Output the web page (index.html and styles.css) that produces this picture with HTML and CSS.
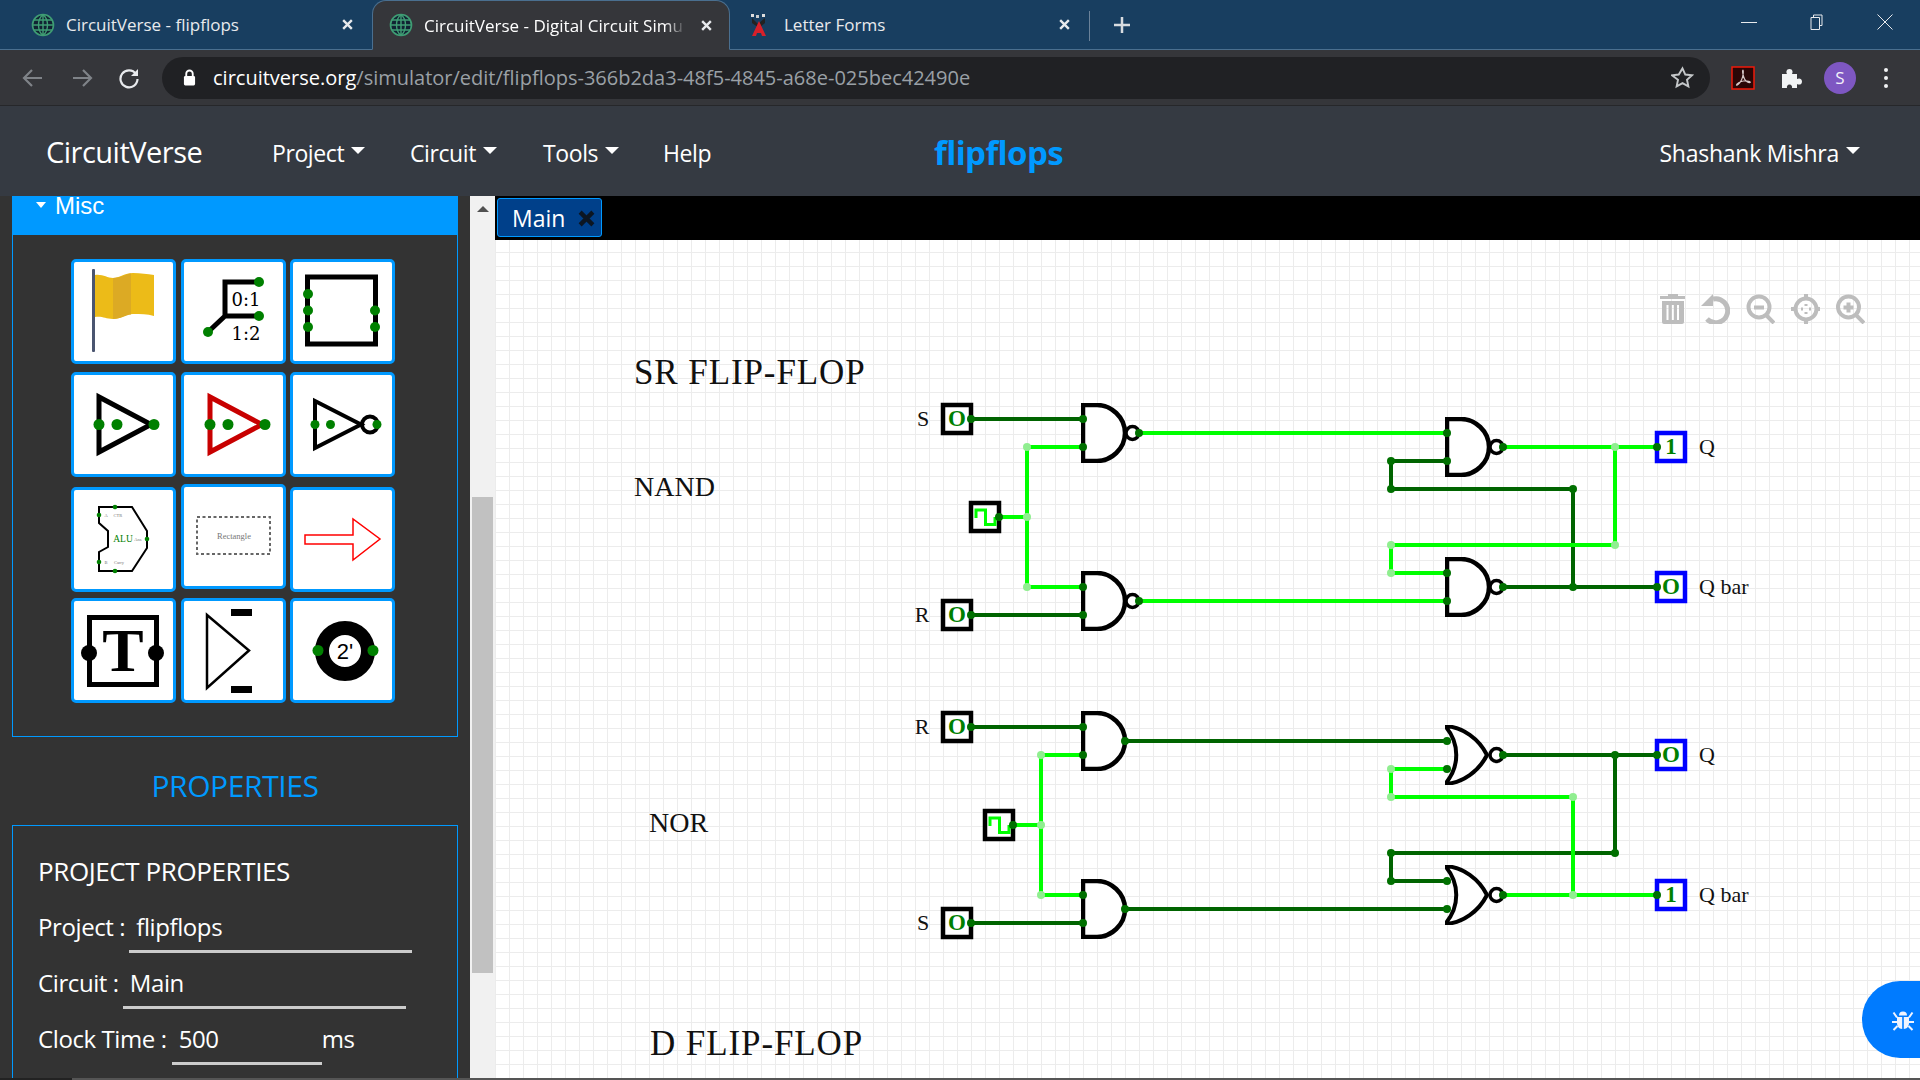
FILE: index.html
```html
<!DOCTYPE html>
<html lang="en">
<head>
    <meta charset="UTF-8">
    <title>CircuitVerse - Digital Circuit Simulator</title>
    <link rel="stylesheet" href="styles.css">
</head>
<body>

<!-- Browser tabs -->
<div class="tabstrip">
    <div class="tab">
        <svg class="favicon" viewBox="0 0 24 24"><use href="#globe"/></svg>
        <span class="tab-title">CircuitVerse - flipflops</span>
        <svg class="tab-close" viewBox="0 0 12 12"><path d="M2 2l8 8M10 2l-8 8"/></svg>
    </div>
    <div class="tab tab-active">
        <svg class="favicon" viewBox="0 0 24 24"><use href="#globe"/></svg>
        <span class="tab-title">CircuitVerse - Digital Circuit Simu</span>
        <svg class="tab-close" viewBox="0 0 12 12"><path d="M2 2l8 8M10 2l-8 8"/></svg>
    </div>
    <div class="tab tab-last">
        <svg class="favicon favicon-small" viewBox="0 0 20 24">
            <rect x="2" y="1" width="3" height="3" fill="#ddd"/><rect x="7" y="2" width="3" height="3" fill="#ccc"/><rect x="13" y="1" width="3" height="3" fill="#ddd"/>
            <path d="M3 5l6 6 7-6v5l-6 5-7-5z" fill="#222"/>
            <path d="M10 8l7 15h-4l-1-3H8l-1 3H3z" fill="#d8202a"/>
        </svg>
        <span class="tab-title">Letter Forms</span>
        <svg class="tab-close" viewBox="0 0 12 12"><path d="M2 2l8 8M10 2l-8 8"/></svg>
    </div>
    <div class="tab-divider"></div>
    <svg class="new-tab" viewBox="0 0 18 18"><path d="M9 1v16M1 9h16"/></svg>
    <div class="window-buttons">
        <svg viewBox="0 0 16 16"><path d="M0 8.5h16"/></svg>
        <svg viewBox="0 0 16 16"><path d="M4.5 3.5V1h8.5v10.500h-2.500M2 3.500h8.500v12H2z"/></svg>
        <svg viewBox="0 0 16 16"><path d="M0.500 0.500l15 15M15.500 0.500l-15 15"/></svg>
    </div>
</div>

<!-- Address bar -->
<div class="toolbar">
    <svg class="tool-arrow dim" viewBox="0 0 22 22"><path d="M20 11H3M10 3l-8 8 8 8"/></svg>
    <svg class="tool-arrow dim" viewBox="0 0 22 22"><path d="M2 11h17M12 3l8 8-8 8"/></svg>
    <svg class="tool-arrow" viewBox="0 0 22 22"><path d="M18 7a8.500 8.500 0 1 0 1.500 5"/><path class="solid" d="M20 2v7h-7z"/></svg>
    <div class="omnibox">
        <svg class="lock" viewBox="0 0 14 18"><path d="M3.500 8V5a3.500 3.500 0 0 1 7 0v3" fill="none" stroke="#fff" stroke-width="2"/><rect x="1" y="7.500" width="12" height="10" rx="1.500" fill="#fff"/></svg>
        <span class="url"><b>circuitverse.org</b>/simulator/edit/flipflops-366b2da3-48f5-4845-a68e-025bec42490e</span>
        <svg class="star" viewBox="0 0 24 24"><path d="M12 2.500l2.900 6.400 7 .8-5.200 4.700 1.400 6.900-6.100-3.500-6.100 3.500 1.400-6.900L1.100 9.700l7-.8z"/></svg>
    </div>
    <svg class="ext-pdf" viewBox="0 0 24 24"><rect x="1" y="1" width="22" height="22" fill="#2a0606" stroke="#f01a0a" stroke-width="1.500"/><path d="M12 4c-1 0 0 6 1.500 9 1 2 4 4 5.500 3.500s-3-2-6.500-1.500-7 3-7 4 3-1 5-5 2-10 1.500-10z" fill="none" stroke="#d8c8c8" stroke-width="1.200"/></svg>
    <svg class="ext-puzzle" viewBox="0 0 24 24"><path d="M2 8h5c-1-1.500-1-5 2.500-5s3.500 3.500 2.500 5h5v5c1.500-1 5-1 5 2.500s-3.500 3.500-5 2.500v4h-5c.5-1.500-.5-3.500-2.500-3.500S6.500 20.500 7 22H2z"/></svg>
    <div class="avatar">S</div>
    <div class="chrome-menu"><i></i><i></i><i></i></div>
</div>

<!-- Site navbar -->
<nav class="navbar">
    <span class="brand">CircuitVerse</span>
    <span class="nav-item nav-project">Project<i class="caret"></i></span>
    <span class="nav-item nav-circuit">Circuit<i class="caret"></i></span>
    <span class="nav-item nav-tools">Tools<i class="caret"></i></span>
    <span class="nav-item nav-help">Help</span>
    <span class="project-name">flipflops</span>
    <span class="nav-item nav-user">Shashank Mishra<i class="caret"></i></span>
</nav>

<div class="workspace">
    <!-- Left panel -->
    <aside class="sidebar">
        <div class="misc-head"><i class="caret"></i>Misc</div>
        <div class="misc-panel">
            <div class="tile-grid">
                <div class="tile">
                    <svg viewBox="3 3 99 99">
                        <path d="M24 16C32 15 36 19 42 19S54 14 62 14 76 15 83 16V57C76 55 70 55 62 55S50 60 42 60 32 57 24 58Z" fill="#ecbb18"/>
                        <path d="M42 19C50 19 54 15 60 14.500V55.500C54 56 50 60 42 60Z" fill="#dcaa24"/>
                        <rect x="21" y="10" width="3" height="83" rx="1" fill="#4a5570"/>
                    </svg>
                </div>
                <div class="tile">
                    <svg viewBox="3 3 99 99">
                        <path class="ic" d="M78 23H44V57H78M44 57L27 73" stroke-width="5"/>
                        <text class="ic-wide" x="65" y="47">0:1</text>
                        <text class="ic-wide" x="65" y="81">1:2</text>
                        <circle class="ic-node" cx="78" cy="23" r="5"/><circle class="ic-node" cx="78" cy="57" r="5"/><circle class="ic-node" cx="27" cy="73" r="5"/>
                    </svg>
                </div>
                <div class="tile">
                    <svg viewBox="3 3 99 99">
                        <rect class="ic" x="17.500" y="18" width="68" height="67" stroke-width="5"/>
                        <circle class="ic-node" cx="18" cy="35" r="5"/><circle class="ic-node" cx="18" cy="51.500" r="5"/><circle class="ic-node" cx="18" cy="68" r="5"/>
                        <circle class="ic-node" cx="85" cy="51.500" r="5"/><circle class="ic-node" cx="85" cy="68" r="5"/>
                    </svg>
                </div>
                <div class="tile">
                    <svg viewBox="3 3 99 99">
                        <path class="ic" d="M28 25V80L80 52.500Z" stroke-width="5"/>
                        <circle class="ic-node" cx="28" cy="52.500" r="5.500"/><circle class="ic-node" cx="46" cy="52.500" r="5.500"/><circle class="ic-node" cx="83" cy="52.500" r="5.500"/>
                    </svg>
                </div>
                <div class="tile">
                    <svg viewBox="3 3 99 99">
                        <path class="ic ic-red" d="M29 25V80L81 52.500Z" stroke-width="5"/>
                        <circle class="ic-node" cx="29" cy="52.500" r="5.500"/><circle class="ic-node" cx="47" cy="52.500" r="5.500"/><circle class="ic-node" cx="84" cy="52.500" r="5.500"/>
                    </svg>
                </div>
                <div class="tile">
                    <svg viewBox="3 3 99 99">
                        <path class="ic" d="M25 29V76L71 52.500Z" stroke-width="4"/>
                        <circle class="ic" cx="80" cy="52.500" r="8" stroke-width="4"/>
                        <circle class="ic-node" cx="25" cy="52.500" r="4.500"/><circle class="ic-node" cx="40.500" cy="52.500" r="4.500"/><circle class="ic-node" cx="87" cy="52.500" r="4.500"/>
                    </svg>
                </div>
                <div class="tile tile-low">
                    <svg viewBox="3 3 99 99">
                        <path class="ic" d="M28 20H61L76 44V61L61 84H28V65L37 60V44L28 36Z" stroke-width="2"/>
                        <text class="ic-serif ic-green" x="52" y="55" font-size="9.500">ALU</text>
                        <text class="ic-tiny" x="35" y="30">A</text><text class="ic-tiny" x="47" y="30">CTR</text>
                        <text class="ic-tiny" x="67" y="54">Ans</text>
                        <text class="ic-tiny" x="35" y="77">B</text><text class="ic-tiny" x="48" y="77">Carry</text>
                        <circle class="ic-node" cx="44" cy="20" r="2.300"/><circle class="ic-node" cx="28" cy="28" r="2.300"/><circle class="ic-node" cx="76" cy="52" r="2.300"/>
                        <circle class="ic-node" cx="28" cy="75" r="2.300"/><circle class="ic-node" cx="44" cy="84" r="2.300"/>
                    </svg>
                </div>
                <div class="tile tile-high">
                    <svg viewBox="3 3 99 99">
                        <rect x="16" y="33" width="73" height="37" fill="none" stroke="#666" stroke-width="2" stroke-dasharray="3 2.500"/>
                        <text class="ic-serif ic-gray" x="53" y="55" font-size="8.500">Rectangle</text>
                    </svg>
                </div>
                <div class="tile tile-low">
                    <svg viewBox="3 3 99 99"><path d="M15 48H63V32L90 52 63 73V57H15Z" fill="none" stroke="#f00" stroke-width="1.500"/></svg>
                </div>
                <div class="tile">
                    <svg viewBox="3 3 99 99">
                        <rect class="ic" x="18.500" y="19.500" width="67" height="67" stroke-width="5"/>
                        <text class="ic-serif ic-t" x="52" y="73">T</text>
                        <circle cx="18" cy="55" r="8"/><circle cx="85" cy="55" r="8"/>
                    </svg>
                </div>
                <div class="tile">
                    <svg viewBox="3 3 99 99">
                        <path class="ic" d="M26 17V90L68 52.500Z" stroke-width="2.500"/>
                        <rect x="50" y="11" width="21" height="7"/><rect x="50" y="88" width="21" height="7"/>
                    </svg>
                </div>
                <div class="tile">
                    <svg viewBox="3 3 99 99">
                        <circle class="ic" cx="55" cy="53" r="23" stroke-width="14"/>
                        <text class="ic-sans" x="55" y="61" font-size="22">2'</text>
                        <circle class="ic-node" cx="28" cy="52.500" r="5.500"/><circle class="ic-node" cx="83" cy="52.500" r="5.500"/>
                    </svg>
                </div>
            </div>
        </div>

        <h3 class="props-title">PROPERTIES</h3>
        <div class="props-panel">
            <h4>PROJECT PROPERTIES</h4>
            <div class="prop-row">Project :<span class="prop-value prop-project">flipflops</span></div>
            <div class="prop-row">Circuit :<span class="prop-value prop-circuit">Main</span></div>
            <div class="prop-row">Clock Time :<span class="prop-value prop-clock">500</span><span class="prop-unit">ms</span></div>
            <div class="clock-slider"><i></i></div>
        </div>
    </aside>

    <div class="scrollbar">
        <i class="scroll-up"></i>
        <i class="scroll-thumb"></i>
    </div>

    <main class="stage">
        <div class="circuit-tabs">
            <div class="circuit-tab">Main<svg viewBox="0 0 16 16"><path d="M2 2l12 12M14 2L2 14"/></svg></div>
        </div>
        <div class="canvas">
            <svg class="schematic" viewBox="495 240 1425 838">
                <defs>
                    <symbol id="globe" viewBox="0 0 24 24">
                        <circle cx="12" cy="12" r="10.500" fill="#123" stroke="#3f9d74" stroke-width="1.600"/>
                        <path d="M12 1.500v21M1.500 12h21M3 7h18M3 17h18M12 1.500c-6 5-6 16 0 21M12 1.500c6 5 6 16 0 21" fill="none" stroke="#3f9d74" stroke-width="1.400"/>
                    </symbol>
                    <symbol id="and-gate" viewBox="0 0 60 60" width="60" height="60">
                        <path d="M2 2H16C30 2 44 14 44 30S30 58 16 58H2Z" fill="#fff" stroke="#000" stroke-width="4.500"/>
                    </symbol>
                    <symbol id="nand-gate" viewBox="0 0 60 60" width="60" height="60">
                        <path d="M2 2H16C30 2 44 14 44 30S30 58 16 58H2Z" fill="#fff" stroke="#000" stroke-width="4.500"/>
                        <circle cx="51.500" cy="30" r="6.500" fill="#fff" stroke="#000" stroke-width="3.500"/>
                    </symbol>
                    <symbol id="nor-gate" viewBox="0 0 60 60" width="60" height="60">
                        <path d="M0 1C18 2 34 14 42 30 34 46 18 58 0 59 15 42 15 18 0 1Z" fill="#fff" stroke="#000" stroke-width="4"/>
                        <circle cx="51.500" cy="30" r="6.500" fill="#fff" stroke="#000" stroke-width="3.500"/>
                    </symbol>
                </defs>

                <!-- dead wires -->
                <g class="wire-off">
                    <path d="M971 419H1083M971 615H1083"/>
                    <path d="M1447 461H1391V489H1573V587M1503 587H1657"/>
                    <path d="M971 727H1083M971 923H1083"/>
                    <path d="M1125 741H1447M1125 909H1447"/>
                    <path d="M1503 755H1657M1615 755V853H1391V881H1447"/>
                </g>
                <!-- live wires -->
                <g class="wire-on">
                    <path d="M1139 433H1447M1139 601H1447"/>
                    <path d="M1083 447H1027V587H1083M999 517H1027"/>
                    <path d="M1503 447H1657M1615 447V545H1391V573H1447"/>
                    <path d="M1083 755H1041V895H1083M1013 825H1041"/>
                    <path d="M1447 769H1391V797H1573V895M1503 895H1657"/>
                </g>

                <!-- inputs -->
                <g class="io-box">
                    <rect x="943" y="405" width="28" height="28"/>
                    <rect x="943" y="601" width="28" height="28"/>
                    <rect x="943" y="713" width="28" height="28"/>
                    <rect x="943" y="909" width="28" height="28"/>
                    <rect x="971" y="503" width="28" height="28"/>
                    <rect x="985" y="811" width="28" height="28"/>
                </g>
                <g class="io-box io-out">
                    <rect x="1657" y="433" width="28" height="28"/>
                    <rect x="1657" y="573" width="28" height="28"/>
                    <rect x="1657" y="741" width="28" height="28"/>
                    <rect x="1657" y="881" width="28" height="28"/>
                </g>
                <g class="clock-wave">
                    <path d="M976 518V510H985.500V524.500H995V517"/>
                    <path d="M990 826V818H999.500V832.500H1009V825"/>
                </g>
                <g class="io-val">
                    <text x="957" y="426">O</text><text x="957" y="622">O</text>
                    <text x="957" y="734">O</text><text x="957" y="930">O</text>
                    <text x="1671" y="454">1</text><text x="1671" y="594">O</text>
                    <text x="1671" y="762">O</text><text x="1671" y="902">1</text>
                </g>

                <!-- gates -->
                <use href="#nand-gate" x="1081" y="403"/>
                <use href="#nand-gate" x="1081" y="571"/>
                <use href="#nand-gate" x="1445" y="417"/>
                <use href="#nand-gate" x="1445" y="557"/>
                <use href="#and-gate" x="1081" y="711"/>
                <use href="#and-gate" x="1081" y="879"/>
                <use href="#nor-gate" x="1445" y="725"/>
                <use href="#nor-gate" x="1445" y="865"/>

                <!-- green pins -->
                <g class="pin">
                    <circle cx="971" cy="419" r="4"/><circle cx="971" cy="615" r="4"/><circle cx="971" cy="727" r="4"/><circle cx="971" cy="923" r="4"/>
                    <circle cx="999" cy="517" r="4"/><circle cx="1013" cy="825" r="4"/>
                    <circle cx="1083" cy="419" r="4"/><circle cx="1083" cy="447" r="4"/><circle cx="1083" cy="587" r="4"/><circle cx="1083" cy="615" r="4"/>
                    <circle cx="1083" cy="727" r="4"/><circle cx="1083" cy="755" r="4"/><circle cx="1083" cy="895" r="4"/><circle cx="1083" cy="923" r="4"/>
                    <circle cx="1139" cy="433" r="4"/><circle cx="1139" cy="601" r="4"/><circle cx="1125" cy="741" r="4"/><circle cx="1125" cy="909" r="4"/>
                    <circle cx="1447" cy="433" r="4"/><circle cx="1447" cy="461" r="4"/><circle cx="1447" cy="573" r="4"/><circle cx="1447" cy="601" r="4"/>
                    <circle cx="1447" cy="741" r="4"/><circle cx="1447" cy="769" r="4"/><circle cx="1447" cy="881" r="4"/><circle cx="1447" cy="909" r="4"/>
                    <circle cx="1503" cy="447" r="4"/><circle cx="1503" cy="587" r="4"/><circle cx="1503" cy="755" r="4"/><circle cx="1503" cy="895" r="4"/>
                    <circle cx="1657" cy="447" r="4"/><circle cx="1657" cy="587" r="4"/><circle cx="1657" cy="755" r="4"/><circle cx="1657" cy="895" r="4"/>
                    <circle cx="1391" cy="461" r="4"/><circle cx="1391" cy="489" r="4"/><circle cx="1573" cy="489" r="4"/><circle cx="1573" cy="587" r="4"/>
                    <circle cx="1615" cy="755" r="4"/><circle cx="1615" cy="853" r="4"/><circle cx="1391" cy="853" r="4"/><circle cx="1391" cy="881" r="4"/>
                </g>
                <g class="pin-live">
                    <circle cx="1027" cy="447" r="4"/><circle cx="1027" cy="517" r="4"/><circle cx="1027" cy="587" r="4"/>
                    <circle cx="1041" cy="755" r="4"/><circle cx="1041" cy="825" r="4"/><circle cx="1041" cy="895" r="4"/>
                    <circle cx="1615" cy="447" r="4"/><circle cx="1615" cy="545" r="4"/><circle cx="1391" cy="545" r="4"/><circle cx="1391" cy="573" r="4"/>
                    <circle cx="1391" cy="769" r="4"/><circle cx="1391" cy="797" r="4"/><circle cx="1573" cy="797" r="4"/><circle cx="1573" cy="895" r="4"/>
                </g>

                <!-- labels -->
                <g class="label">
                    <text x="923" y="426" text-anchor="middle">S</text>
                    <text x="922" y="622" text-anchor="middle">R</text>
                    <text x="922" y="734" text-anchor="middle">R</text>
                    <text x="923" y="930" text-anchor="middle">S</text>
                    <text x="1699" y="454">Q</text>
                    <text x="1699" y="594">Q bar</text>
                    <text x="1699" y="762">Q</text>
                    <text x="1699" y="902">Q bar</text>
                </g>
                <text class="title-big" x="634" y="384">SR FLIP-FLOP</text>
                <text class="title-mid" x="634" y="496">NAND</text>
                <text class="title-mid" x="649" y="832">NOR</text>
                <text class="title-big" x="650" y="1055">D FLIP-FLOP</text>
            </svg>

            <div class="canvas-tools">
                <svg viewBox="0 0 30 30"><path fill-rule="evenodd" d="M5 2h8V0h10v2h8v3H5zM7 7h22v21a2 2 0 0 1-2 2H9a2 2 0 0 1-2-2zM11.500 11v15h2V11zM16.800 11v15h2V11zM22 11v15h2V11z"/></svg>
                <svg viewBox="0 0 30 30"><path class="tool-line tool-heavy" d="M13 5A12 12 0 1 1 7 25"/><path d="M1 12L13 0v12z"/></svg>
                <svg viewBox="0 0 30 30"><circle class="tool-line" cx="14" cy="13" r="10.500"/><path class="tool-line" d="M21 21l8 8M9 13.500h10" /></svg>
                <svg viewBox="0 0 30 30"><circle class="tool-line" cx="16" cy="15" r="10.500"/><path class="tool-line" d="M16 0v6M16 24v6M1 15h6M25 15h6"/><path class="tool-thin" d="M16 10v2M16 18v2M11 15h2M19 15h2"/></svg>
                <svg viewBox="0 0 30 30"><circle class="tool-line" cx="13.500" cy="13" r="10.500"/><path class="tool-line" d="M21 21l8 8M8.500 13.500h10M13.500 8.500v10"/></svg>
            </div>

            <div class="bug-button">
                <svg viewBox="0 0 22 22"><path d="M7 6.500a4 4 0 0 1 8 0zM5 8h5.200v12C7 20 5 17 5 14zM11.800 8H17v6c0 3-2 6-5.200 6z"/><path class="bug-legs" d="M1.500 3.500L5 8.500M20.500 3.500L17 8.500M0 13h5M22 13h-5M1.500 21L5.500 17M20.500 21L16.500 17"/></svg>
            </div>
        </div>
    </main>
</div>
<div class="page-edge"></div>

</body>
</html>
```

FILE: styles.css
```css
* {
    box-sizing: border-box;
}

body {
    margin: 0;
    width: 1920px;
    height: 1080px;
    overflow: hidden;
    display: flex;
    flex-direction: column;
    font-family: "Open Sans", "Noto Sans", sans-serif;
    background: #333;
}

/* browser chrome */
.tabstrip {
    height: 50px;
    flex: none;
    display: flex;
    align-items: stretch;
    background: #183e60;
    border-bottom: 1px solid #4a6f8f;
    color: #e8eaed;
    font-size: 17px;
}

.tab {
    width: 358px;
    display: flex;
    align-items: center;
    padding: 0 18px 0 31px;
    position: relative;
}

.tab:first-child {
    width: 372px;
}

.tab-active {
    padding: 0 16px 0 16px;
    background: #35363a;
    border: 1px solid #4a6f8f;
    border-bottom: 1px solid #35363a;
    border-radius: 14px 14px 0 0;
    height: 50px;
    color: #fff;
}

.tab-active .tab-title {
    -webkit-mask-image: linear-gradient(90deg, #000 92%, transparent);
    mask-image: linear-gradient(90deg, #000 92%, transparent);
}

.tab-active .tab-close {
    margin-left: 14px;
}

.tab-last {
    width: 359px;
    padding-left: 19px;
}

.favicon {
    width: 24px;
    height: 24px;
    flex: none;
    margin-right: 11px;
}

.favicon-small {
    width: 20px;
    margin-right: 15px;
}

.tab-title {
    flex: 1;
    white-space: nowrap;
}

.tab-close {
    width: 13px;
    height: 13px;
    flex: none;
    margin-left: 20px;
    fill: none;
    stroke: #e8eaed;
    stroke-width: 2.200;
}

.tab-divider {
    width: 1px;
    height: 30px;
    margin: 11px 0 0 0;
    background: #6b8299;
}

.new-tab {
    width: 18px;
    height: 18px;
    margin: 16px 0 0 23px;
    fill: none;
    stroke: #d8dce0;
    stroke-width: 2.500;
}

.window-buttons {
    margin-left: auto;
    display: flex;
    gap: 52px;
    padding: 14px 27px 0 0;
}

.window-buttons svg {
    width: 16px;
    height: 16px;
    fill: none;
    stroke: #e8eaed;
    stroke-width: 1;
}

.toolbar {
    height: 56px;
    flex: none;
    display: flex;
    align-items: center;
    background: #35363a;
    border-bottom: 1px solid #26272a;
    padding-left: 22px;
}

.tool-arrow {
    width: 22px;
    height: 22px;
    margin-right: 27px;
    fill: none;
    stroke: #e8eaed;
    stroke-width: 2.200;
}

.tool-arrow.dim {
    stroke: #7f8388;
}

.tool-arrow .solid {
    fill: #e8eaed;
    stroke: none;
}

.tool-arrow:nth-child(3) {
    margin-right: 0;
    margin-left: -2px;
}

.omnibox {
    width: 1548px;
    height: 42px;
    margin-left: 22px;
    flex: none;
    display: flex;
    align-items: center;
    padding: 0 16px 0 21px;
    border-radius: 21px;
    background: #202124;
    color: #9aa0a6;
    font-size: 20px;
}

.omnibox b {
    font-weight: 400;
    color: #fff;
}

.lock {
    width: 13px;
    height: 17px;
    margin-right: 17px;
}

.url {
    flex: 1;
    white-space: nowrap;
}

.star {
    width: 23px;
    height: 23px;
    fill: none;
    stroke: #c4c7c9;
    stroke-width: 2;
}

.ext-pdf {
    width: 24px;
    height: 24px;
    margin-left: 21px;
}

.ext-puzzle {
    width: 24px;
    height: 24px;
    margin-left: 25px;
    fill: #f1f3f4;
}

.avatar {
    width: 32px;
    height: 32px;
    margin-left: 20px;
    border-radius: 50%;
    background: #7e57c2;
    color: #f3f0fa;
    font-size: 17px;
    line-height: 32px;
    text-align: center;
}

.chrome-menu {
    margin-left: 28px;
    display: flex;
    flex-direction: column;
    gap: 4px;
}

.chrome-menu i {
    display: block;
    width: 4px;
    height: 4px;
    border-radius: 50%;
    background: #f1f3f4;
}

/* site navbar */
.navbar {
    height: 90px;
    flex: none;
    display: flex;
    align-items: center;
    padding: 3px 0 0 46px;
    background: #353a42;
    color: #fff;
    font-size: 23px;
}

.brand {
    width: 226px;
    margin-top: -3px;
    font-size: 29px;
    letter-spacing: -0.5px;
}

.nav-item {
    display: inline-flex;
    align-items: center;
    letter-spacing: -0.4px;
}

.nav-project {
    width: 138px;
}

.nav-circuit {
    width: 133px;
}

.nav-tools {
    width: 120px;
}

.nav-help {
    width: 271px;
}

.nav-user {
    margin-left: auto;
    padding-right: 60px;
    letter-spacing: -0.25px;
}

.project-name {
    margin-top: -1px;
    font-size: 33px;
    font-weight: 700;
    color: #0099ff;
    letter-spacing: -0.6px;
}

.caret {
    display: block;
    width: 0;
    height: 0;
    margin: -4px 0 0 7px;
    border: 7px solid transparent;
    border-top-color: #fff;
    border-bottom: 0;
}

/* main area */
.workspace {
    flex: 1;
    min-height: 0;
    display: flex;
}

.sidebar {
    width: 470px;
    flex: none;
    background: #333;
    color: #fff;
    padding-left: 12px;
}

.misc-head {
    width: 446px;
    height: 39px;
    display: flex;
    background: #0099ff;
    font-family: "Liberation Sans", Arial, sans-serif;
    font-size: 24px;
    line-height: 20px;
    padding-left: 24px;
}

.misc-head .caret {
    margin: 6px 9px 0 0;
    border-width: 6px 5px 0;
}

.misc-panel {
    width: 446px;
    height: 502px;
    padding: 24px 0 0 58px;
    border: 1px solid #0099ff;
    border-top: 0;
}

.tile-grid {
    display: grid;
    grid-template-columns: repeat(3, 105px);
    grid-auto-rows: 105px;
    column-gap: 4.500px;
    row-gap: 8px;
}

.tile {
    height: 105px;
    background: #fff;
    border: 3px solid #0099ff;
    border-radius: 5px;
}

.tile svg {
    display: block;
    width: 99px;
    height: 99px;
}

.tile-low {
    margin-top: 2px;
}

.tile-high {
    margin-top: -1px;
}

.ic {
    fill: none;
    stroke: #000;
}

.ic-red {
    stroke: #c80000;
}

.ic-node {
    fill: #008000;
}

.ic-serif {
    font-family: "Liberation Serif", serif;
    text-anchor: middle;
}

.ic-wide {
    font-family: "DejaVu Serif", serif;
    font-size: 18px;
    text-anchor: middle;
}

.ic-green {
    fill: #008000;
}

.ic-gray {
    fill: #777;
}

.ic-tiny {
    font-family: "Liberation Serif", serif;
    font-size: 4.500px;
    text-anchor: middle;
    fill: #777;
}

.ic-t {
    font-size: 62px;
    font-weight: 700;
}

.ic-sans {
    font-family: "Liberation Sans", Arial, sans-serif;
    text-anchor: middle;
}

.props-title {
    width: 446px;
    margin: 0;
    padding-top: 29px;
    height: 88px;
    text-align: center;
    color: #0099ff;
    font-size: 30px;
    font-weight: 400;
    line-height: 40px;
    letter-spacing: -0.4px;
}

.props-panel {
    width: 446px;
    height: 253px;
    padding: 27px 0 0 25px;
    border: 1px solid #0099ff;
    border-bottom: 0;
    font-size: 24px;
    letter-spacing: -0.4px;
}

.props-panel h4 {
    margin: 0 0 17px;
    font-size: 26px;
    font-weight: 400;
    line-height: 36px;
}

.prop-row {
    height: 56px;
    display: flex;
    align-items: flex-start;
    line-height: 42px;
    white-space: nowrap;
}

.prop-value {
    display: block;
    height: 47px;
    padding-left: 7px;
    border-bottom: 3px solid #ccc;
}

.prop-project {
    width: 283px;
    margin-left: 4px;
}

.prop-circuit {
    width: 283px;
    margin-left: 4px;
}

.prop-clock {
    width: 150px;
    margin-left: 5px;
}

.clock-slider {
    width: 64px;
    height: 3px;
    margin: 9px 0 0 167px;
    background: #fff;
}

.clock-slider i {
    display: block;
    width: 39px;
    height: 3px;
    background: #2e8ae6;
}

.scrollbar {
    width: 25px;
    flex: none;
    position: relative;
    background: #f1f1f1;
}

.scroll-up {
    position: absolute;
    left: 7px;
    top: 10px;
    border: 6px solid transparent;
    border-top: 0;
    border-bottom-color: #505050;
}

.scroll-thumb {
    position: absolute;
    left: 2px;
    top: 301px;
    width: 21px;
    height: 476px;
    background: #c1c1c1;
}

.stage {
    flex: 1;
    min-width: 0;
    display: flex;
    flex-direction: column;
}

.circuit-tabs {
    height: 44px;
    flex: none;
    padding: 2px 0 0 2px;
    background: #000;
}

.circuit-tab {
    width: 105px;
    height: 39px;
    display: flex;
    align-items: center;
    padding: 1px 0 0 14px;
    background: #00408a;
    border: 1px solid #0099ff;
    border-radius: 3px;
    color: #fff;
    font-size: 23px;
}

.circuit-tab svg {
    width: 17px;
    height: 17px;
    margin-left: 13px;
    fill: none;
    stroke: #0c1622;
    stroke-width: 4;
}

.canvas {
    flex: 1;
    min-height: 0;
    position: relative;
    background-color: #fff;
    background-image:
        linear-gradient(#ececec 1px, transparent 1px),
        linear-gradient(90deg, #ececec 1px, transparent 1px);
    background-size: 14px 14px;
    background-position: 0 12px;
}

.schematic {
    display: block;
    width: 1425px;
    height: 838px;
}

.wire-on,
.wire-off {
    fill: none;
    stroke-width: 4;
}

.wire-on {
    stroke: #00ff00;
}

.wire-off {
    stroke: #006400;
}

.io-box rect {
    fill: #fff;
    stroke: #000;
    stroke-width: 4.500;
}

.io-out rect {
    stroke: #0000ff;
}

.clock-wave {
    fill: none;
    stroke: #00ff00;
    stroke-width: 3;
}

.io-val text {
    font-family: "Liberation Serif", serif;
    font-size: 23px;
    font-weight: 700;
    text-anchor: middle;
    fill: #008000;
}

.pin {
    fill: #007000;
}

.pin-live {
    fill: #90ee90;
}

.label text {
    font-family: "Liberation Serif", serif;
    font-size: 22px;
    fill: #111;
}

.title-big,
.title-mid {
    font-family: "Liberation Serif", serif;
    fill: #111;
}

.title-big {
    font-size: 35px;
    letter-spacing: 0.9px;
}

.title-mid {
    font-size: 28px;
}

.canvas-tools {
    position: absolute;
    top: 54px;
    right: 55px;
    display: flex;
    gap: 15px;
}

.canvas-tools svg {
    width: 30px;
    height: 30px;
    fill: #bdbdbd;
}

.tool-line {
    fill: none;
    stroke: #bdbdbd;
    stroke-width: 4;
}

.tool-heavy {
    stroke-width: 5;
}

.tool-thin {
    fill: none;
    stroke: #bdbdbd;
    stroke-width: 3;
}

.bug-button {
    position: absolute;
    right: 0;
    bottom: 20px;
    width: 58px;
    height: 77px;
    display: flex;
    align-items: center;
    padding-left: 30px;
    border-radius: 38px 0 0 38px;
    background: #007bff;
}

.bug-button svg {
    width: 22px;
    height: 22px;
    flex: none;
    fill: #f0f4ff;
}

.bug-legs {
    fill: none;
    stroke: #f0f4ff;
    stroke-width: 2;
}

.page-edge {
    height: 2px;
    flex: none;
    position: relative;
    background: linear-gradient(90deg, #222 72px, #555 72px);
}
```
